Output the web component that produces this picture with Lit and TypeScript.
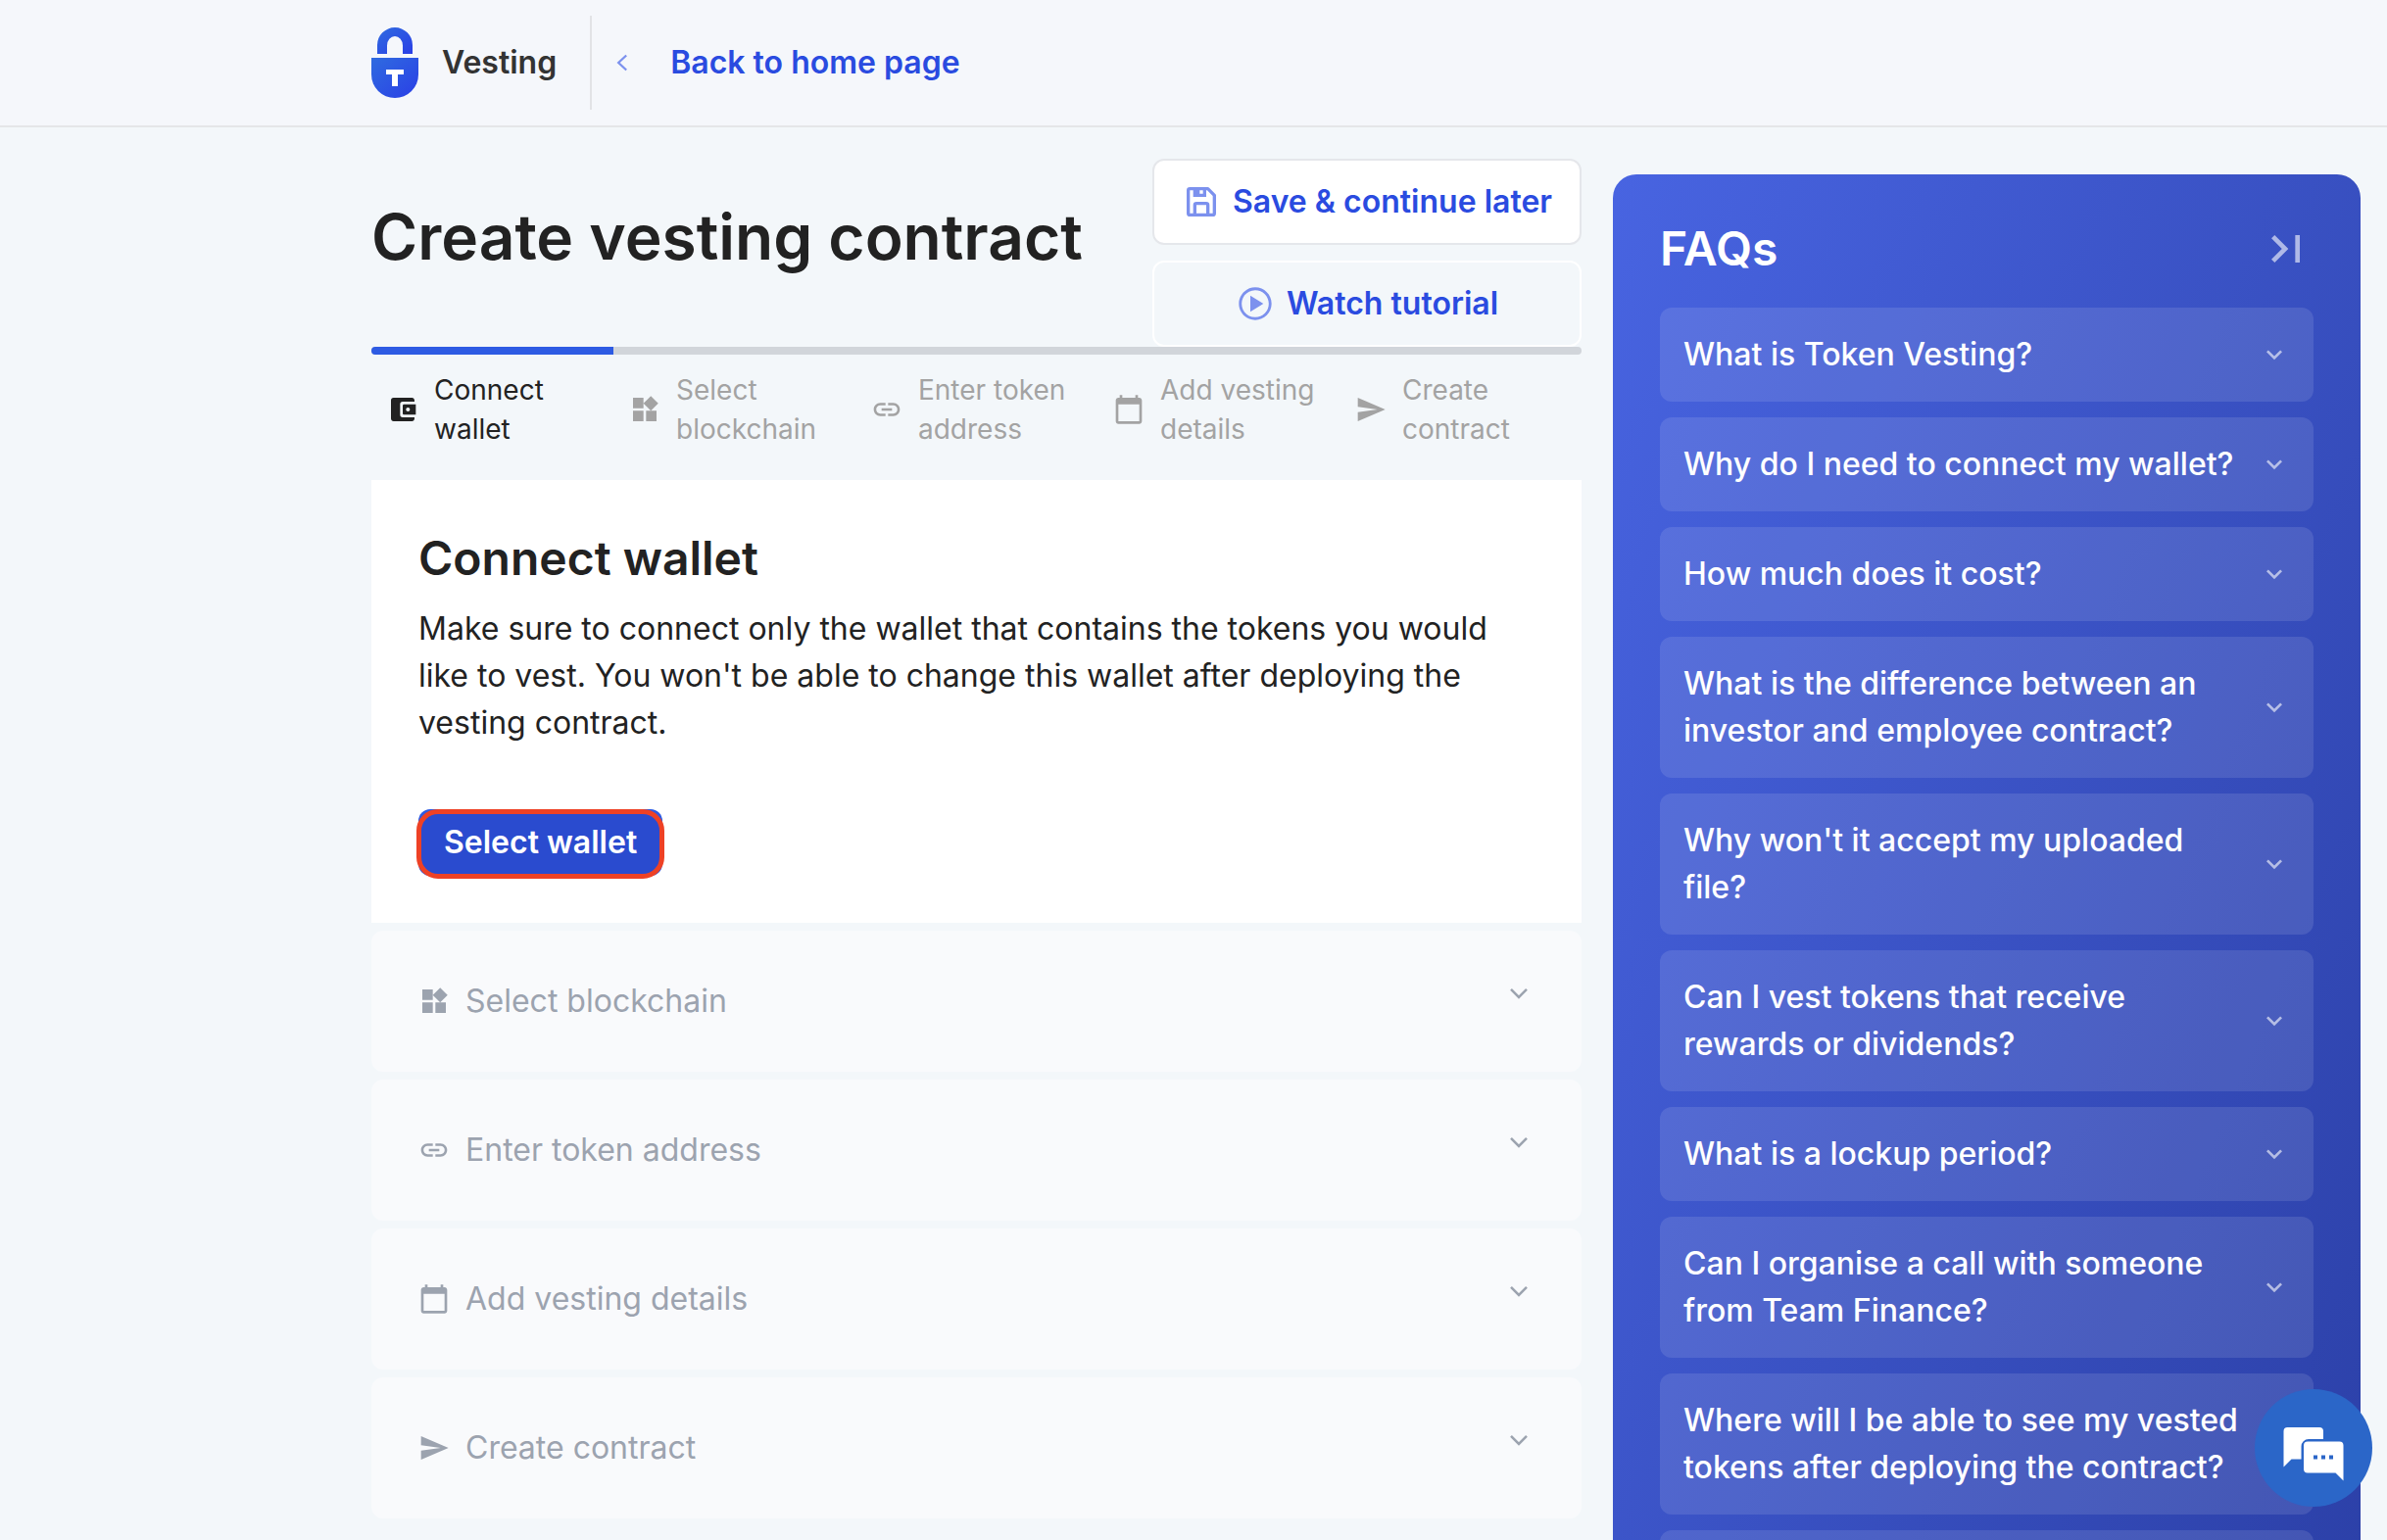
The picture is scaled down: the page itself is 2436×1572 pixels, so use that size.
import { LitElement, html, css, svg } from "lit";
import { customElement } from "lit/decorators.js";
import { classMap } from "lit/directives/class-map.js";

const paths = {
  wallet: svg`<path d="M10 16V8a2 2 0 0 1 2-2h9V5c0-1.1-.9-2-2-2H5a2 2 0 0 0-2 2v14c0 1.1.9 2 2 2h14c1.1 0 2-.9 2-2v-1h-9a2 2 0 0 1-2-2zm3-8c-.55 0-1 .45-1 1v6c0 .55.45 1 1 1h9V8h-9zm3 5.5c-.83 0-1.5-.67-1.5-1.5s.67-1.5 1.5-1.5 1.5.67 1.5 1.5-.67 1.5-1.5 1.5z"/>`,
  widgets: svg`<path d="M13 13v8h8v-8h-8zM3 21h8v-8H3v8zM3 3v8h8V3H3zm13.66-1.31L11 7.34 16.66 13l5.66-5.66-5.66-5.65z"/>`,
  link: svg`<path d="M3.9 12c0-1.71 1.39-3.1 3.1-3.1h4V7H7c-2.76 0-5 2.24-5 5s2.24 5 5 5h4v-1.9H7c-1.71 0-3.1-1.39-3.1-3.1zM8 13h8v-2H8v2zm9-6h-4v1.9h4c1.71 0 3.1 1.39 3.1 3.1s-1.39 3.1-3.1 3.1h-4V17h4c2.76 0 5-2.24 5-5s-2.24-5-5-5z"/>`,
  calendar: svg`<path d="M20 3h-1V1h-2v2H7V1H5v2H4c-1.1 0-2 .9-2 2v16c0 1.1.9 2 2 2h16c1.1 0 2-.9 2-2V5c0-1.1-.9-2-2-2zm0 18H4V8h16v13z"/>`,
  send: svg`<path d="M2.01 21 23 12 2.01 3 2 10l15 2-15 2z"/>`,
  save: svg`<path d="M5 21h14a2 2 0 0 0 2-2V8a1 1 0 0 0-.29-.71l-4-4A1 1 0 0 0 16 3H5a2 2 0 0 0-2 2v14a2 2 0 0 0 2 2zm10-2H9v-5h6zM13 7h-2V5h2zM5 5h2v4h8V5h.59L19 8.41V19h-2v-5a2 2 0 0 0-2-2H9a2 2 0 0 0-2 2v5H5z"/>`,
  play: svg`<path d="m9 17 8-5-8-5z"/><path d="M12 2C6.486 2 2 6.486 2 12s4.486 10 10 10 10-4.486 10-10S17.514 2 12 2zm0 18.3c-4.6 0-8.3-3.7-8.3-8.3s3.7-8.3 8.3-8.3 8.3 3.7 8.3 8.3-3.7 8.3-8.3 8.3z"/>`,
  collapse: svg`<path d="M5.59 7.41 10.18 12l-4.59 4.59L7 18l6-6-6-6zM16 6h2v12h-2z"/>`,
  expand: svg`<path d="M16.59 8.59 12 13.17 7.41 8.59 6 10l6 6 6-6z"/>`,
  chevron: svg`<path d="m6 8.9 6 6 6-6" fill="none" stroke="currentColor" stroke-width="1.9"/>`,
  back: svg`<path d="m14.4 6.4-6 5.6 6 5.6" fill="none" stroke="currentColor" stroke-width="1.7"/>`,
};
type IconName = keyof typeof paths;

const icon = (name: IconName, size = "") =>
  html`<svg class="icon ${size}" viewBox="0 0 24 24" aria-hidden="true">${paths[name]}</svg>`;

const steps: { icon: IconName; label: string }[] = [
  { icon: "wallet", label: "Connect wallet" },
  { icon: "widgets", label: "Select blockchain" },
  { icon: "link", label: "Enter token address" },
  { icon: "calendar", label: "Add vesting details" },
  { icon: "send", label: "Create contract" },
];

const questions = [
  "What is Token Vesting?",
  "Why do I need to connect my wallet?",
  "How much does it cost?",
  "What is the difference between an investor and employee contract?",
  "Why won't it accept my uploaded file?",
  "Can I vest tokens that receive rewards or dividends?",
  "What is a lockup period?",
  "Can I organise a call with someone from Team Finance?",
  "Where will I be able to see my vested tokens after deploying the contract?",
];

@customElement("app-root")
export class AppRoot extends LitElement {
  static styles = css`
    :host {
      display: block;
      height: 100vh;
      overflow: hidden;
      background: #f3f7fa;
      color: #222222;
      font-family: Inter, "Liberation Sans", sans-serif;
      font-size: 32px;
      line-height: 48px;
    }
    * {
      box-sizing: border-box;
    }
    h1, h2, p, ol {
      margin: 0;
      padding: 0;
    }
    button {
      font: inherit;
      color: inherit;
      border: 0;
      padding: 0;
      background: none;
      text-align: left;
      cursor: pointer;
    }
    a {
      color: inherit;
      text-decoration: none;
    }
    .icon {
      display: block;
      flex: none;
      width: 32px;
      height: 32px;
      fill: currentColor;
    }
    .icon.medium {
      width: 40px;
      height: 40px;
    }
    .icon.large {
      width: 56px;
      height: 56px;
    }

    .topbar {
      display: flex;
      align-items: center;
      height: 130px;
      padding-left: 379px;
      border-bottom: 2px solid #e5e6e8;
      background: #f5f7fb;
    }
    .brand {
      display: flex;
      align-items: center;
      gap: 24px;
      height: 96px;
      padding-right: 34px;
      border-right: 2px solid #e2e3e6;
      font-weight: 600;
      color: #333333;
    }
    .logo {
      display: block;
      width: 48px;
      height: 72px;
    }
    .back {
      display: flex;
      align-items: center;
      gap: 32px;
      padding-left: 16px;
      font-weight: 600;
      color: #2a4be0;
    }
    .back .icon, .action .icon {
      color: #7c91ee;
    }

    .page {
      display: grid;
      grid-template-columns: minmax(0, 1235fr) minmax(0, 763fr);
      gap: 32px;
      align-items: start;
      padding: 32px 27px 0 379px;
    }
    .heading {
      display: flex;
      justify-content: space-between;
      align-items: flex-start;
    }
    .heading h1 {
      padding-top: 40px;
      font-size: 64px;
      line-height: 80px;
      font-weight: 600;
    }
    .actions {
      display: flex;
      flex-direction: column;
      gap: 16px;
    }
    .action {
      display: flex;
      align-items: center;
      justify-content: center;
      gap: 12px;
      height: 88px;
      padding: 0 28px;
      border: 2px solid #ffffff;
      border-radius: 12px;
      font-weight: 600;
      color: #2a4be0;
    }
    .action.solid {
      background: #ffffff;
      border-color: #e5e7eb;
    }

    .progress {
      height: 8px;
      border-radius: 4px;
      overflow: hidden;
      background: #d1d5da;
    }
    .progress-fill {
      height: 100%;
      background: #2d5be3;
    }
    .steps {
      display: grid;
      grid-template-columns: repeat(5, minmax(0, 1fr));
      padding: 16px 0 32px;
      list-style: none;
      font-size: 28px;
      line-height: 40px;
    }
    .step {
      display: flex;
      align-items: center;
      gap: 16px;
      padding: 0 16px;
      color: #a3a3a3;
    }
    .step.current {
      color: #222222;
    }

    .sections {
      display: flex;
      flex-direction: column;
      gap: 8px;
    }
    .card {
      padding: 48px;
      background: #ffffff;
    }
    .card h2 {
      font-size: 48px;
      line-height: 64px;
      font-weight: 600;
      margin-bottom: 16px;
    }
    .primary {
      position: relative;
      z-index: 0;
      display: block;
      height: 68px;
      margin-top: 64px;
      padding: 0 26px;
      border-radius: 12px;
      background: #2d5be3;
      color: #ffffff;
      font-weight: 600;
    }
    .primary::before {
      content: "";
      position: absolute;
      z-index: -1;
      inset: 0 -2px -3px -2px;
      border: 5px solid #ee4125;
      border-radius: 22px;
      background: #2a4bcf;
    }
    .section {
      display: flex;
      align-items: flex-start;
      gap: 16px;
      padding: 48px;
      border-radius: 12px;
      background: #f9fafc;
      color: #9ca3af;
    }
    .section-title {
      display: flex;
      flex: 1;
      align-items: center;
      gap: 16px;
    }

    .faqs {
      margin-top: 16px;
      padding: 48px 48px 64px;
      border-radius: 24px 24px 0 0;
      background: linear-gradient(112deg, #4864e1 0%, #2b3fa6 100%);
      color: #ffffff;
    }
    .faqs-head {
      display: flex;
      align-items: center;
      justify-content: space-between;
      height: 56px;
      margin-bottom: 32px;
    }
    .faqs-head h2 {
      font-size: 48px;
      line-height: 56px;
      font-weight: 600;
    }
    .faqs .icon {
      color: rgba(255, 255, 255, 0.6);
    }
    .faq-list {
      display: flex;
      flex-direction: column;
      gap: 16px;
    }
    .faq {
      display: flex;
      align-items: center;
      justify-content: space-between;
      gap: 16px;
      min-height: 96px;
      padding: 24px;
      border-radius: 12px;
      background: rgba(255, 255, 255, 0.11);
      font-weight: 500;
    }

    .chat {
      position: fixed;
      right: 15px;
      bottom: 34px;
      display: grid;
      place-items: center;
      width: 120px;
      height: 120px;
      border-radius: 50%;
      background: #2b66c8;
    }
    .chat svg {
      display: block;
      width: 120px;
      height: 120px;
    }
  `;

  render() {
    return html`
      <header class="topbar">
        <div class="brand">
          <svg class="logo" viewBox="0 0 48 72" aria-hidden="true">
            <defs>
              <linearGradient id="lock" x1="0" y1="0" x2="1" y2="1">
                <stop offset="0" stop-color="#2f6be0" />
                <stop offset="1" stop-color="#2a3fe6" />
              </linearGradient>
            </defs>
            <path fill="url(#lock)" d="M6 27V18a18 18 0 0 1 36 0v9H32V18.500a8 9.500 0 0 0-16 0V27z" />
            <path fill="url(#lock)" d="M0 31h48v17a24 24 0 0 1-48 0z" />
            <path fill="#ffffff" d="M15 43h18v5h-6v12h-6V48h-6z" />
          </svg>
          <span>Vesting</span>
        </div>
        <a class="back" href="#home">${icon("back")}<span>Back to home page</span></a>
      </header>

      <div class="page">
        <main>
          <div class="heading">
            <h1>Create vesting contract</h1>
            <div class="actions">
              <button class="action solid">${icon("save", "medium")}<span>Save &amp; continue later</span></button>
              <button class="action">${icon("play", "medium")}<span>Watch tutorial</span></button>
            </div>
          </div>
          <div class="progress"><div class="progress-fill" style="width: ${100 / steps.length}%"></div></div>
          <ol class="steps">
            ${steps.map(
              (s, i) => html`<li class=${classMap({ step: true, current: i === 0 })}>${icon(s.icon)}<span>${s.label}</span></li>`
            )}
          </ol>
          <div class="sections">
            <section class="card">
              <h2>Connect wallet</h2>
              <p>
                Make sure to connect only the wallet that contains the tokens you would like to vest. You won't be able to
                change this wallet after deploying the vesting contract.
              </p>
              <button class="primary">Select wallet</button>
            </section>
            ${steps.slice(1).map(
              (s) => html`<button class="section">
                <span class="section-title">${icon(s.icon)}<span>${s.label}</span></span>
                ${icon("chevron")}
              </button>`
            )}
          </div>
        </main>

        <aside class="faqs">
          <div class="faqs-head">
            <h2>FAQs</h2>
            <button aria-label="Collapse">${icon("collapse", "large")}</button>
          </div>
          <div class="faq-list">
            ${questions.map((q) => html`<button class="faq"><span>${q}</span>${icon("expand")}</button>`)}
            <div class="faq" aria-hidden="true"></div>
          </div>
        </aside>
      </div>

      <button class="chat" aria-label="Chat">
        <svg viewBox="0 0 120 120" aria-hidden="true">
          <path fill="#ffffff" d="M29.500 79.500V43a4 4 0 0 1 4-4H66a4 4 0 0 1 4 4v8H55a7.500 7.500 0 0 0-7.500 7.500V71.500H37.500z" />
          <path fill="#ffffff" d="M54 53.500h32.500a4 4 0 0 1 4 4V93.500l-8-8H54a4 4 0 0 1-4-4v-24a4 4 0 0 1 4-4z" />
          <path fill="#2b66c8" d="M60 67.500h4v4h-4zm8 0h4v4h-4zm8 0h4v4h-4z" />
        </svg>
      </button>
    `;
  }
}
